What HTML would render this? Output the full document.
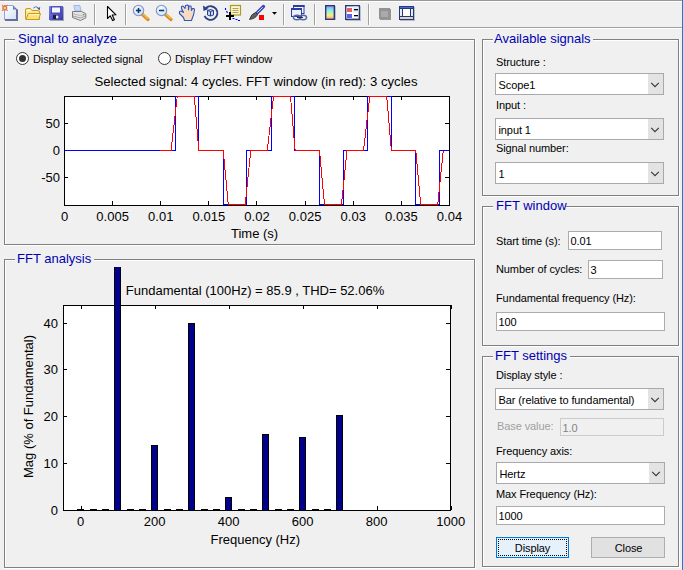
<!DOCTYPE html>
<html><head><meta charset="utf-8"><style>
html,body{margin:0;padding:0;width:683px;height:570px;overflow:hidden;background:#f0f0f0;}
body{position:relative;font-family:"Liberation Sans", sans-serif;}
body div, body svg{position:absolute;box-sizing:content-box;}
.t{white-space:pre;} .s{letter-spacing:-0.1px;}
</style></head><body>
<div style="left:0px;top:0px;width:683px;height:1px;background:#999999"></div>
<div style="left:0px;top:1px;width:683px;height:1px;background:#ffffff"></div>
<div style="left:0px;top:27px;width:683px;height:1px;background:#a0a0a0"></div>
<div style="left:0px;top:28px;width:683px;height:1px;background:#ffffff"></div>
<div style="left:682px;top:0px;width:1px;height:570px;background:#1a7cd6"></div>
<div style="left:4px;top:39px;width:471px;height:1px;background:#808080"></div>
<div style="left:4px;top:39px;width:1px;height:206px;background:#808080"></div>
<div style="left:474px;top:39px;width:1px;height:206px;background:#808080"></div>
<div style="left:4px;top:244px;width:471px;height:1px;background:#808080"></div>
<div style="left:5px;top:40px;width:469px;height:1px;background:#ffffff"></div>
<div style="left:5px;top:40px;width:1px;height:204px;background:#ffffff"></div>
<div style="left:475px;top:39px;width:1px;height:207px;background:#ffffff"></div>
<div style="left:4px;top:245px;width:472px;height:1px;background:#ffffff"></div>
<div style="left:15px;top:37px;width:104px;height:5px;background:#f0f0f0"></div>
<div class="t" style="left:18px;top:32px;font-size:13px;line-height:13px;color:#0000b0;">Signal to analyze</div>
<div style="left:4px;top:259px;width:471px;height:1px;background:#808080"></div>
<div style="left:4px;top:259px;width:1px;height:309px;background:#808080"></div>
<div style="left:474px;top:259px;width:1px;height:309px;background:#808080"></div>
<div style="left:4px;top:567px;width:471px;height:1px;background:#808080"></div>
<div style="left:5px;top:260px;width:469px;height:1px;background:#ffffff"></div>
<div style="left:5px;top:260px;width:1px;height:307px;background:#ffffff"></div>
<div style="left:475px;top:259px;width:1px;height:310px;background:#ffffff"></div>
<div style="left:4px;top:568px;width:472px;height:1px;background:#ffffff"></div>
<div style="left:15px;top:257px;width:79px;height:5px;background:#f0f0f0"></div>
<div class="t" style="left:17px;top:252px;font-size:13px;line-height:13px;color:#0000b0;">FFT analysis</div>
<div style="left:482px;top:39px;width:197px;height:1px;background:#808080"></div>
<div style="left:482px;top:39px;width:1px;height:157px;background:#808080"></div>
<div style="left:678px;top:39px;width:1px;height:157px;background:#808080"></div>
<div style="left:482px;top:195px;width:197px;height:1px;background:#808080"></div>
<div style="left:483px;top:40px;width:195px;height:1px;background:#ffffff"></div>
<div style="left:483px;top:40px;width:1px;height:155px;background:#ffffff"></div>
<div style="left:679px;top:39px;width:1px;height:158px;background:#ffffff"></div>
<div style="left:482px;top:196px;width:198px;height:1px;background:#ffffff"></div>
<div style="left:493px;top:37px;width:100px;height:5px;background:#f0f0f0"></div>
<div class="t" style="left:494px;top:32px;font-size:13px;line-height:13px;color:#0000b0;">Available signals</div>
<div style="left:482px;top:206px;width:197px;height:1px;background:#808080"></div>
<div style="left:482px;top:206px;width:1px;height:140px;background:#808080"></div>
<div style="left:678px;top:206px;width:1px;height:140px;background:#808080"></div>
<div style="left:482px;top:345px;width:197px;height:1px;background:#808080"></div>
<div style="left:483px;top:207px;width:195px;height:1px;background:#ffffff"></div>
<div style="left:483px;top:207px;width:1px;height:138px;background:#ffffff"></div>
<div style="left:679px;top:206px;width:1px;height:141px;background:#ffffff"></div>
<div style="left:482px;top:346px;width:198px;height:1px;background:#ffffff"></div>
<div style="left:493px;top:204px;width:73px;height:5px;background:#f0f0f0"></div>
<div class="t" style="left:496px;top:199px;font-size:13px;line-height:13px;color:#0000b0;">FFT window</div>
<div style="left:482px;top:356px;width:197px;height:1px;background:#808080"></div>
<div style="left:482px;top:356px;width:1px;height:211px;background:#808080"></div>
<div style="left:678px;top:356px;width:1px;height:211px;background:#808080"></div>
<div style="left:482px;top:566px;width:197px;height:1px;background:#808080"></div>
<div style="left:483px;top:357px;width:195px;height:1px;background:#ffffff"></div>
<div style="left:483px;top:357px;width:1px;height:209px;background:#ffffff"></div>
<div style="left:679px;top:356px;width:1px;height:212px;background:#ffffff"></div>
<div style="left:482px;top:567px;width:198px;height:1px;background:#ffffff"></div>
<div style="left:493px;top:354px;width:77px;height:5px;background:#f0f0f0"></div>
<div class="t" style="left:495px;top:349px;font-size:13px;line-height:13px;color:#0000b0;">FFT settings</div>
<div style="left:16.0px;top:52.0px;width:11px;height:11px;border:1px solid #333;border-radius:50%;background:#fff"><div style="left:2px;top:2px;width:7px;height:7px;border-radius:50%;background:#333"></div></div>
<div class="t" style="left:33px;top:54px;font-size:11px;line-height:11px;color:#000;letter-spacing:-0.1px;">Display selected signal</div>
<div style="left:158.0px;top:52.0px;width:11px;height:11px;border:1px solid #333;border-radius:50%;background:#fff"></div>
<div class="t" style="left:175px;top:54px;font-size:11px;line-height:11px;color:#000;letter-spacing:-0.1px;">Display FFT window</div>
<div class="t" style="left:496px;top:57px;font-size:11px;line-height:11px;color:#000;letter-spacing:-0.1px;">Structure :</div>
<div style="left:495px;top:73px;width:167px;height:20px;border:1px solid #a9a9ad;background:#fff"></div>
<div style="left:648px;top:74px;width:15px;height:20px;background:#e3e3e3"></div>
<svg style="left:648px;top:73px" width="15" height="21"><path d="M3.2 9.9 L7 13.6 L10.8 9.9" fill="none" stroke="#383838" stroke-width="1.15"/></svg>
<div class="t" style="left:498.5px;top:80px;font-size:11px;line-height:11px;color:#000;letter-spacing:-0.1px;">Scope1</div>
<div class="t" style="left:496px;top:100px;font-size:11px;line-height:11px;color:#000;letter-spacing:-0.1px;">Input :</div>
<div style="left:495px;top:118px;width:167px;height:20px;border:1px solid #a9a9ad;background:#fff"></div>
<div style="left:648px;top:119px;width:15px;height:20px;background:#e3e3e3"></div>
<svg style="left:648px;top:118px" width="15" height="21"><path d="M3.2 9.9 L7 13.6 L10.8 9.9" fill="none" stroke="#383838" stroke-width="1.15"/></svg>
<div class="t" style="left:498.5px;top:125px;font-size:11px;line-height:11px;color:#000;letter-spacing:-0.1px;">input 1</div>
<div class="t" style="left:496px;top:143px;font-size:11px;line-height:11px;color:#000;letter-spacing:-0.1px;">Signal number:</div>
<div style="left:495px;top:162px;width:167px;height:20px;border:1px solid #a9a9ad;background:#fff"></div>
<div style="left:648px;top:163px;width:15px;height:20px;background:#e3e3e3"></div>
<svg style="left:648px;top:162px" width="15" height="21"><path d="M3.2 9.9 L7 13.6 L10.8 9.9" fill="none" stroke="#383838" stroke-width="1.15"/></svg>
<div class="t" style="left:498.5px;top:169px;font-size:11px;line-height:11px;color:#000;letter-spacing:-0.1px;">1</div>
<div class="t" style="left:496px;top:236px;font-size:11px;line-height:11px;color:#000;letter-spacing:-0.1px;">Start time (s):</div>
<div style="left:568px;top:231px;width:92px;height:17px;border:1px solid #acacac;background:#fff"></div>
<div class="t" style="left:570.5px;top:236px;font-size:11px;line-height:11px;color:#000;letter-spacing:-0.1px;">0.01</div>
<div class="t" style="left:496px;top:264px;font-size:11px;line-height:11px;color:#000;letter-spacing:-0.1px;">Number of cycles:</div>
<div style="left:588px;top:260px;width:73px;height:17px;border:1px solid #acacac;background:#fff"></div>
<div class="t" style="left:590.5px;top:265px;font-size:11px;line-height:11px;color:#000;letter-spacing:-0.1px;">3</div>
<div class="t" style="left:496px;top:293px;font-size:11px;line-height:11px;color:#000;letter-spacing:-0.1px;">Fundamental frequency (Hz):</div>
<div style="left:496px;top:312px;width:167px;height:17px;border:1px solid #acacac;background:#fff"></div>
<div class="t" style="left:498.5px;top:317px;font-size:11px;line-height:11px;color:#000;letter-spacing:-0.1px;">100</div>
<div class="t" style="left:496px;top:370px;font-size:11px;line-height:11px;color:#000;letter-spacing:-0.1px;">Display style :</div>
<div style="left:495px;top:388px;width:167px;height:20px;border:1px solid #a9a9ad;background:#fff"></div>
<div style="left:648px;top:389px;width:15px;height:20px;background:#e3e3e3"></div>
<svg style="left:648px;top:388px" width="15" height="21"><path d="M3.2 9.9 L7 13.6 L10.8 9.9" fill="none" stroke="#383838" stroke-width="1.15"/></svg>
<div class="t" style="left:498.5px;top:395px;font-size:11px;line-height:11px;color:#000;letter-spacing:-0.1px;">Bar (relative to fundamental)</div>
<div class="t" style="left:497px;top:421px;font-size:11px;line-height:11px;color:#a0a0a0;letter-spacing:-0.1px;">Base value:</div>
<div style="left:560px;top:418px;width:102px;height:16px;border:1px solid #cccccc;background:#f0f0f0"></div>
<div class="t" style="left:562.5px;top:423px;font-size:11px;line-height:11px;color:#838383;letter-spacing:-0.1px;">1.0</div>
<div class="t" style="left:496px;top:446px;font-size:11px;line-height:11px;color:#000;letter-spacing:-0.1px;">Frequency axis:</div>
<div style="left:496px;top:462px;width:167px;height:20px;border:1px solid #a9a9ad;background:#fff"></div>
<div style="left:649px;top:463px;width:15px;height:20px;background:#e3e3e3"></div>
<svg style="left:649px;top:462px" width="15" height="21"><path d="M3.2 9.9 L7 13.6 L10.8 9.9" fill="none" stroke="#383838" stroke-width="1.15"/></svg>
<div class="t" style="left:499.5px;top:469px;font-size:11px;line-height:11px;color:#000;letter-spacing:-0.1px;">Hertz</div>
<div class="t" style="left:496px;top:489px;font-size:11px;line-height:11px;color:#000;letter-spacing:-0.1px;">Max Frequency (Hz):</div>
<div style="left:496px;top:506px;width:167px;height:17px;border:1px solid #acacac;background:#fff"></div>
<div class="t" style="left:498.5px;top:511px;font-size:11px;line-height:11px;color:#000;letter-spacing:-0.1px;">1000</div>
<div style="left:496px;top:537px;width:71px;height:19px;border:1px solid #0078d7;background:#e5f1fb"></div>
<div style="left:498px;top:539px;width:67px;height:15px;border:1px dotted #000"></div>
<div class="t" style="left:232.5px;width:600px;text-align:center;top:543px;font-size:11px;line-height:11px;color:#000;letter-spacing:-0.1px;">Display</div>
<div style="left:591px;top:537px;width:72px;height:19px;border:1px solid #adadad;background:#e1e1e1"></div>
<div class="t" style="left:328.5px;width:600px;text-align:center;top:543px;font-size:11px;line-height:11px;color:#000;letter-spacing:-0.1px;">Close</div>
<div style="left:64px;top:96px;width:385px;height:109px;background:#fff"></div>
<svg style="left:0;top:0" width="683" height="570"><rect x="64.5" y="96.5" width="385" height="109" fill="none" stroke="#000" stroke-width="1"/><line x1="64.5" y1="96" x2="64.5" y2="100" stroke="#000"/><line x1="64.5" y1="205" x2="64.5" y2="201" stroke="#000"/><line x1="112.5" y1="96" x2="112.5" y2="100" stroke="#000"/><line x1="112.5" y1="205" x2="112.5" y2="201" stroke="#000"/><line x1="160.5" y1="96" x2="160.5" y2="100" stroke="#000"/><line x1="160.5" y1="205" x2="160.5" y2="201" stroke="#000"/><line x1="208.5" y1="96" x2="208.5" y2="100" stroke="#000"/><line x1="208.5" y1="205" x2="208.5" y2="201" stroke="#000"/><line x1="256.5" y1="96" x2="256.5" y2="100" stroke="#000"/><line x1="256.5" y1="205" x2="256.5" y2="201" stroke="#000"/><line x1="305.5" y1="96" x2="305.5" y2="100" stroke="#000"/><line x1="305.5" y1="205" x2="305.5" y2="201" stroke="#000"/><line x1="353.5" y1="96" x2="353.5" y2="100" stroke="#000"/><line x1="353.5" y1="205" x2="353.5" y2="201" stroke="#000"/><line x1="401.5" y1="96" x2="401.5" y2="100" stroke="#000"/><line x1="401.5" y1="205" x2="401.5" y2="201" stroke="#000"/><line x1="449.5" y1="96" x2="449.5" y2="100" stroke="#000"/><line x1="449.5" y1="205" x2="449.5" y2="201" stroke="#000"/><line x1="64" y1="123.5" x2="68" y2="123.5" stroke="#000"/><line x1="449" y1="123.5" x2="445" y2="123.5" stroke="#000"/><line x1="64" y1="150.5" x2="68" y2="150.5" stroke="#000"/><line x1="449" y1="150.5" x2="445" y2="150.5" stroke="#000"/><line x1="64" y1="177.5" x2="68" y2="177.5" stroke="#000"/><line x1="449" y1="177.5" x2="445" y2="177.5" stroke="#000"/><polyline points="64.50,150.50 175.25,150.50 175.25,96.50 198.65,96.50 198.65,150.50 223.45,150.50 223.45,204.50 246.75,204.50 246.75,150.50 271.50,150.50 271.50,96.50 294.90,96.50 294.90,150.50 319.70,150.50 319.70,204.50 343.00,204.50 343.00,150.50 367.75,150.50 367.75,96.50 391.15,96.50 391.15,150.50 415.95,150.50 415.95,204.50 439.25,204.50 439.25,150.50 449.00,150.50" fill="none" stroke="#0000ff" stroke-width="1" shape-rendering="crispEdges"/><polyline points="160.25,150.50 171.05,150.50 177.25,96.50 194.25,96.50 198.85,150.50 223.25,150.50 228.25,204.50 245.25,204.50 250.75,150.50 267.30,150.50 273.50,96.50 290.50,96.50 295.10,150.50 319.50,150.50 324.50,204.50 341.50,204.50 347.00,150.50 363.55,150.50 369.75,96.50 386.75,96.50 391.35,150.50 415.75,150.50 420.75,204.50 437.75,204.50 443.25,150.50" fill="none" stroke="#ff0000" stroke-width="1" shape-rendering="crispEdges"/></svg>
<div class="t" style="left:-235.5px;width:600px;text-align:center;top:210px;font-size:13px;line-height:13px;color:#000;">0</div>
<div class="t" style="left:-187.375px;width:600px;text-align:center;top:210px;font-size:13px;line-height:13px;color:#000;">0.005</div>
<div class="t" style="left:-139.25px;width:600px;text-align:center;top:210px;font-size:13px;line-height:13px;color:#000;">0.01</div>
<div class="t" style="left:-91.125px;width:600px;text-align:center;top:210px;font-size:13px;line-height:13px;color:#000;">0.015</div>
<div class="t" style="left:-43.0px;width:600px;text-align:center;top:210px;font-size:13px;line-height:13px;color:#000;">0.02</div>
<div class="t" style="left:5.125px;width:600px;text-align:center;top:210px;font-size:13px;line-height:13px;color:#000;">0.025</div>
<div class="t" style="left:53.25px;width:600px;text-align:center;top:210px;font-size:13px;line-height:13px;color:#000;">0.03</div>
<div class="t" style="left:101.375px;width:600px;text-align:center;top:210px;font-size:13px;line-height:13px;color:#000;">0.035</div>
<div class="t" style="left:149.5px;width:600px;text-align:center;top:210px;font-size:13px;line-height:13px;color:#000;">0.04</div>
<div class="t" style="left:-240px;width:300px;text-align:right;top:117px;font-size:13px;line-height:13px;color:#000;">50</div>
<div class="t" style="left:-240px;width:300px;text-align:right;top:144px;font-size:13px;line-height:13px;color:#000;">0</div>
<div class="t" style="left:-240px;width:300px;text-align:right;top:171px;font-size:13px;line-height:13px;color:#000;">-50</div>
<div class="t" style="left:231px;top:227px;font-size:13px;line-height:13px;color:#000;">Time (s)</div>
<div class="t" style="left:-44px;width:600px;text-align:center;top:75px;font-size:13.16px;line-height:13.16px;color:#000;">Selected signal: 4 cycles. FFT window (in red): 3 cycles</div>
<div style="left:63px;top:305px;width:387px;height:205px;background:#fff"></div>
<svg style="left:0;top:0" width="683" height="570"><rect x="63.5" y="305.5" width="387" height="205" fill="none" stroke="#000" stroke-width="1"/><line x1="81.5" y1="305" x2="81.5" y2="309" stroke="#000"/><line x1="81.5" y1="510" x2="81.5" y2="506" stroke="#000"/><line x1="155.5" y1="305" x2="155.5" y2="309" stroke="#000"/><line x1="155.5" y1="510" x2="155.5" y2="506" stroke="#000"/><line x1="229.5" y1="305" x2="229.5" y2="309" stroke="#000"/><line x1="229.5" y1="510" x2="229.5" y2="506" stroke="#000"/><line x1="303.5" y1="305" x2="303.5" y2="309" stroke="#000"/><line x1="303.5" y1="510" x2="303.5" y2="506" stroke="#000"/><line x1="377.5" y1="305" x2="377.5" y2="309" stroke="#000"/><line x1="377.5" y1="510" x2="377.5" y2="506" stroke="#000"/><line x1="451.5" y1="305" x2="451.5" y2="309" stroke="#000"/><line x1="451.5" y1="510" x2="451.5" y2="506" stroke="#000"/><line x1="63" y1="510.5" x2="67" y2="510.5" stroke="#000"/><line x1="450" y1="510.5" x2="446" y2="510.5" stroke="#000"/><line x1="63" y1="463.5" x2="67" y2="463.5" stroke="#000"/><line x1="450" y1="463.5" x2="446" y2="463.5" stroke="#000"/><line x1="63" y1="416.5" x2="67" y2="416.5" stroke="#000"/><line x1="450" y1="416.5" x2="446" y2="416.5" stroke="#000"/><line x1="63" y1="369.5" x2="67" y2="369.5" stroke="#000"/><line x1="450" y1="369.5" x2="446" y2="369.5" stroke="#000"/><line x1="63" y1="323.5" x2="67" y2="323.5" stroke="#000"/><line x1="450" y1="323.5" x2="446" y2="323.5" stroke="#000"/><rect x="77" y="509" width="7" height="1" fill="#000"/><rect x="90" y="509" width="7" height="1" fill="#000"/><rect x="102" y="509" width="7" height="1" fill="#000"/><rect x="114.5" y="267.5" width="6" height="243" fill="#00008c" stroke="#000" stroke-width="1"/><rect x="115" y="267" width="5" height="2" fill="#00008c"/><rect x="127" y="509" width="7" height="1" fill="#000"/><rect x="139" y="509" width="7" height="1" fill="#000"/><rect x="151.5" y="445.5" width="6" height="65" fill="#00008c" stroke="#000" stroke-width="1"/><rect x="164" y="509" width="7" height="1" fill="#000"/><rect x="176" y="509" width="7" height="1" fill="#000"/><rect x="188.5" y="323.5" width="6" height="187" fill="#00008c" stroke="#000" stroke-width="1"/><rect x="201" y="509" width="7" height="1" fill="#000"/><rect x="213" y="509" width="7" height="1" fill="#000"/><rect x="225.5" y="497.5" width="6" height="13" fill="#00008c" stroke="#000" stroke-width="1"/><rect x="238" y="509" width="7" height="1" fill="#000"/><rect x="250" y="509" width="7" height="1" fill="#000"/><rect x="262.5" y="434.5" width="6" height="76" fill="#00008c" stroke="#000" stroke-width="1"/><rect x="275" y="509" width="7" height="1" fill="#000"/><rect x="287" y="509" width="7" height="1" fill="#000"/><rect x="299.5" y="437.5" width="6" height="73" fill="#00008c" stroke="#000" stroke-width="1"/><rect x="312" y="509" width="7" height="1" fill="#000"/><rect x="324" y="509" width="7" height="1" fill="#000"/><rect x="336.5" y="415.5" width="6" height="95" fill="#00008c" stroke="#000" stroke-width="1"/></svg>
<div class="t" style="left:-219.3px;width:600px;text-align:center;top:515px;font-size:13px;line-height:13px;color:#000;">0</div>
<div class="t" style="left:-145.3px;width:600px;text-align:center;top:515px;font-size:13px;line-height:13px;color:#000;">200</div>
<div class="t" style="left:-71.30000000000001px;width:600px;text-align:center;top:515px;font-size:13px;line-height:13px;color:#000;">400</div>
<div class="t" style="left:2.6999999999999886px;width:600px;text-align:center;top:515px;font-size:13px;line-height:13px;color:#000;">600</div>
<div class="t" style="left:76.69999999999999px;width:600px;text-align:center;top:515px;font-size:13px;line-height:13px;color:#000;">800</div>
<div class="t" style="left:150.7px;width:600px;text-align:center;top:515px;font-size:13px;line-height:13px;color:#000;">1000</div>
<div class="t" style="left:-242px;width:300px;text-align:right;top:504px;font-size:13px;line-height:13px;color:#000;">0</div>
<div class="t" style="left:-242px;width:300px;text-align:right;top:457px;font-size:13px;line-height:13px;color:#000;">10</div>
<div class="t" style="left:-242px;width:300px;text-align:right;top:410px;font-size:13px;line-height:13px;color:#000;">20</div>
<div class="t" style="left:-242px;width:300px;text-align:right;top:363px;font-size:13px;line-height:13px;color:#000;">30</div>
<div class="t" style="left:-242px;width:300px;text-align:right;top:317px;font-size:13px;line-height:13px;color:#000;">40</div>
<div class="t" style="left:210.5px;top:533px;font-size:13px;line-height:13px;color:#000;">Frequency (Hz)</div>
<div class="t" style="left:-45px;width:600px;text-align:center;top:284px;font-size:13px;line-height:13px;color:#000;">Fundamental (100Hz) = 85.9 , THD= 52.06%</div>
<div class="t" style="left:21.9955px;top:478px;font-size:13px;line-height:13px;transform-origin:0 0;transform:rotate(-90deg)">Mag (% of Fundamental)</div>
<svg style="left:0;top:0" width="683" height="28"><defs><linearGradient id="gpage" x1="0" y1="0" x2="1" y2="1"><stop offset="0" stop-color="#ffffff"/><stop offset="1" stop-color="#d4e2f6"/></linearGradient><linearGradient id="gfold" x1="0" y1="0" x2="0" y2="1"><stop offset="0" stop-color="#fff4a0"/><stop offset="1" stop-color="#f0c840"/></linearGradient><linearGradient id="gcb" x1="0" y1="0" x2="0" y2="1"><stop offset="0" stop-color="#a090f0"/><stop offset="0.35" stop-color="#80f0f0"/><stop offset="0.7" stop-color="#f8f080"/><stop offset="1" stop-color="#ffa080"/></linearGradient><linearGradient id="gflop" x1="0" y1="0" x2="1" y2="1"><stop offset="0" stop-color="#8080e8"/><stop offset="1" stop-color="#3838a8"/></linearGradient><radialGradient id="glens" cx="0.4" cy="0.4" r="0.6"><stop offset="0" stop-color="#ffffff"/><stop offset="1" stop-color="#b8ecf4"/></radialGradient></defs><rect x="94" y="4" width="1" height="21" fill="#a0a0a0"/><rect x="95" y="4" width="1" height="21" fill="#ffffff"/><rect x="125" y="4" width="1" height="21" fill="#a0a0a0"/><rect x="126" y="4" width="1" height="21" fill="#ffffff"/><rect x="283" y="4" width="1" height="21" fill="#a0a0a0"/><rect x="284" y="4" width="1" height="21" fill="#ffffff"/><rect x="314" y="4" width="1" height="21" fill="#a0a0a0"/><rect x="315" y="4" width="1" height="21" fill="#ffffff"/><rect x="368" y="4" width="1" height="21" fill="#a0a0a0"/><rect x="369" y="4" width="1" height="21" fill="#ffffff"/><rect x="5" y="6" width="11" height="13" fill="url(#gpage)"/><rect x="4" y="5" width="1" height="15" fill="#88aae4"/><rect x="4" y="5" width="9" height="1" fill="#88aae4"/><rect x="16" y="9" width="2" height="12" fill="#686c9e"/><rect x="5" y="19" width="13" height="2" fill="#686c9e"/><path d="M13 5 L13 9.5 L17.5 9.5 Z" fill="#6a6eae"/><path d="M13 5 L18 10" stroke="#ffffff" stroke-width="0.6" opacity="0.5"/><circle cx="14.3" cy="7.8" r="0.6" fill="#a8c4f0"/><circle cx="4.8" cy="7.9" r="1.9" fill="#e0e070" stroke="#ea7040" stroke-width="1.3"/><circle cx="2.4" cy="5.4" r="0.65" fill="#ea7040"/><circle cx="7.3" cy="5.4" r="0.65" fill="#ea7040"/><circle cx="2.4" cy="10.4" r="0.65" fill="#ea7040"/><circle cx="7.3" cy="10.4" r="0.65" fill="#ea7040"/><path d="M25.5 10 Q25.5 8.5 27 8.5 L30.5 8.5 L32 10.5 L38 10.5 Q39.5 10.5 39.5 12 L39.5 19.5 L26.5 19.5 Q25.5 19.5 25.5 18.5 Z" fill="#fbe89a" stroke="#c89a18" stroke-width="1"/><rect x="26.5" y="10" width="4" height="1" fill="#fffbe0"/><path d="M26 19.5 L28.3 13.5 L40.5 13.5 L38.8 19.5 Z" fill="#fde27a" stroke="#c89a18" stroke-width="1" stroke-linejoin="round"/><path d="M28.8 14.6 L39.2 14.6" stroke="#fff6c8" stroke-width="1"/><path d="M33.2 8.2 Q35.8 5.2 38.6 8" fill="none" stroke="#5a78b4" stroke-width="1"/><path d="M37.2 8.6 L40.2 7 L39.8 10.2 Z" fill="#3c5a98"/><rect x="50" y="7" width="14" height="14" fill="#7a8aa0" opacity="0.7"/><rect x="49" y="6" width="14" height="14" fill="url(#gflop)"/><rect x="51.5" y="7" width="9" height="6" fill="#f4f6ff" stroke="#3030a0" stroke-width="0.8"/><rect x="53" y="15" width="6" height="4" fill="#1a1a40"/><rect x="56" y="15.5" width="2.5" height="3" fill="#e8e8f0"/><path d="M73.8 5.5 L79.8 5.5 L81.2 11 L75.2 11 Z" fill="#c4dcfa" stroke="#9aaad4" stroke-width="0.8"/><path d="M72.5 11.5 L81.5 11.5 L85.8 13.8 L85.8 17.8 L80.5 20.5 L72.5 17.5 Z" fill="#e4e4e4" stroke="#7c7c7c" stroke-width="1"/><path d="M73 16 L80.5 18 L85.5 16" fill="none" stroke="#9a9a9a" stroke-width="0.9"/><path d="M73 13.8 L80.5 15.6 L85 14" fill="none" stroke="#b4b4b4" stroke-width="0.9"/><rect x="83" y="14.2" width="1.2" height="1.2" fill="#48b048"/><path d="M107.5 6.5 L107.5 18.5 L110.2 15.8 L112.6 20.6 L114.4 19.8 L112.2 15 L116 14.8 Z" fill="#ffffff" stroke="#000" stroke-width="1.1" stroke-linejoin="round"/><line x1="142.5" y1="14.5" x2="148.0" y2="19.5" stroke="#d88a20" stroke-width="3.2" stroke-linecap="round"/><line x1="143.0" y1="14.0" x2="148.0" y2="18.8" stroke="#ffc040" stroke-width="1.2"/><circle cx="138.5" cy="10.5" r="5.2" fill="url(#glens)" stroke="#8c8cd0" stroke-width="1.1"/><rect x="135.9" y="9.7" width="5.2" height="1.6" fill="#1c2a6c"/><rect x="137.7" y="7.9" width="1.6" height="5.2" fill="#1c2a6c"/><line x1="165.5" y1="14.5" x2="171.0" y2="19.5" stroke="#d88a20" stroke-width="3.2" stroke-linecap="round"/><line x1="166.0" y1="14.0" x2="171.0" y2="18.8" stroke="#ffc040" stroke-width="1.2"/><circle cx="161.5" cy="10.5" r="5.2" fill="url(#glens)" stroke="#8c8cd0" stroke-width="1.1"/><rect x="158.9" y="9.7" width="5.2" height="1.6" fill="#1c2a6c"/><path d="M184.5 20.5 L183.5 17.5 L179.5 13.5 L179.5 11.5 L181 11 L183.5 12.5 L181.5 8.5 L181.5 6.5 L183 6 L185 8.5 L185.5 5.5 L187.5 5 L188.5 6 L188.5 10 L189 6 L191 6 L191.5 10.5 L192.5 8.5 L194 8.5 L194.5 10 L193.5 15 L192.5 17.5 L191.5 20.5 Z" fill="#f8dcc0" stroke="#2a56c8" stroke-width="1.1" stroke-linejoin="round"/><path d="M204.5 16 A6.8 6.8 0 1 0 206 8" fill="none" stroke="#2a3f86" stroke-width="1.8"/><path d="M203 5.5 L208.5 9 L203.5 11 Z" fill="#2a3f86"/><path d="M207.5 10.5 L210.5 9.5 L213.5 10.5 L213.5 15 L210.5 16 L207.5 15 Z" fill="#c8d4f4" stroke="#2a3f86" stroke-width="1"/><path d="M207.5 10.5 L210.5 11.5 L213.5 10.5 M210.5 11.5 L210.5 16" fill="none" stroke="#2a3f86" stroke-width="1"/><rect x="230.5" y="5.5" width="10" height="9.5" fill="#fff8c4" stroke="#a89a30" stroke-width="1.2"/><rect x="232.5" y="8" width="6" height="1" fill="#a8a070"/><rect x="232.5" y="10" width="6" height="1" fill="#a8a070"/><rect x="232.5" y="12" width="6" height="1" fill="#a8a070"/><rect x="226" y="15" width="8" height="2" fill="#000"/><rect x="229" y="12" width="2" height="8" fill="#000"/><path d="M225.5 8 L225.5 10 M226.5 11 L227.5 13" stroke="#0000ff" stroke-width="1.1"/><path d="M232.5 18.5 L234.5 18.5 M235.5 19.5 L237.5 19.5 M238 20.5 L240 20.5" stroke="#0000ff" stroke-width="1.1"/><line x1="256.5" y1="13.5" x2="263.5" y2="6.5" stroke="#3a46b0" stroke-width="3.2" stroke-linecap="round"/><line x1="257.3" y1="12.7" x2="262.8" y2="7.2" stroke="#e8ecff" stroke-width="0.9"/><path d="M255.5 12.5 L257.5 14.5 Q256 18.5 249.5 19.5 Q251 14 255.5 12.5 Z" fill="#606060" stroke="#303030" stroke-width="0.8"/><rect x="259" y="15" width="5" height="5" fill="#ff0000"/><path d="M272 12 L277 12 L274.5 14.8 Z" fill="#000"/><rect x="293.5" y="5.5" width="10.5" height="8" fill="#f4f6fc" stroke="#2a40a0" stroke-width="1"/><rect x="293" y="5" width="11.5" height="2" fill="#2a40a0"/><rect x="291.5" y="8.5" width="10" height="8" fill="#eef0f8" stroke="#2a40a0" stroke-width="1"/><rect x="291" y="8" width="11" height="2" fill="#2a40a0"/><ellipse cx="297" cy="17.5" rx="3.6" ry="2.2" fill="none" stroke="#5868a0" stroke-width="1.4"/><ellipse cx="303" cy="17.5" rx="3.6" ry="2.2" fill="none" stroke="#5868a0" stroke-width="1.4"/><line x1="297" y1="17.5" x2="303" y2="17.5" stroke="#1a2870" stroke-width="1.2"/><rect x="326" y="6" width="10" height="14" fill="#8090a0" opacity="0.5"/><rect x="325.7" y="5.7" width="8.6" height="13.6" fill="url(#gcb)" stroke="#2a3a78" stroke-width="1.4"/><rect x="346" y="6" width="15" height="15" fill="#8090a0" opacity="0.5"/><rect x="345.7" y="5.7" width="13.6" height="13.6" fill="#ffffff" stroke="#2a3a78" stroke-width="1.4"/><rect x="353" y="6.5" width="5.5" height="6" fill="#e4ecf8"/><rect x="347" y="8" width="5" height="4" fill="#e86060"/><rect x="347" y="14" width="5" height="4" fill="#6060e8"/><rect x="354" y="9" width="4" height="1.3" fill="#000"/><rect x="354" y="15" width="4" height="1.3" fill="#000"/><rect x="380" y="9" width="11" height="11" fill="#989898"/><rect x="379" y="8" width="11" height="11" fill="#939393"/><rect x="381" y="11" width="7" height="6" fill="#aaaaaa"/><rect x="400" y="7" width="15" height="14" fill="#8894a6" opacity="0.55"/><rect x="399" y="6" width="15" height="14" fill="#23397e"/><rect x="400" y="7" width="13" height="1" fill="#4a6ad0"/><rect x="400" y="9" width="2" height="7" fill="#e6eaf2"/><rect x="403" y="9" width="7" height="7" fill="#ffffff"/><rect x="411" y="9" width="2" height="7" fill="#e6eaf2"/><rect x="400" y="17" width="13" height="2" fill="#ded6bc"/></svg>
</body></html>
